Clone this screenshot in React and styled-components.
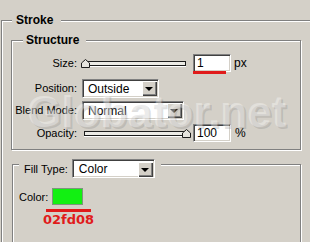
import React from "react";
import styled, { createGlobalStyle, css } from "styled-components";

const Global = createGlobalStyle`
  html, body { margin: 0; padding: 0; background: #d4d0c8; }
  body {
    font-family: "Liberation Sans", Arial, sans-serif;
    font-size: 11px;
    color: #000;
  }
`;

const Screen = styled.div`
  position: relative;
  box-sizing: border-box;
  width: 310px;
  height: 242px;
  overflow: hidden;
  background: #d4d0c8;
  padding: 20px 0 0 1px;
`;

// etched group box: grey line with a white line beside it
const Group = styled.div`
  box-sizing: border-box;
  flex-shrink: 0;
  width: ${(p) => p.$w}px;
  height: ${(p) => p.$h}px;
  margin: ${(p) => p.$top}px 0 0 ${(p) => p.$left}px;
  border: 1px solid #808080;
  box-shadow: inset 1px 1px 0 #fff, 1px 1px 0 #fff;
  display: flex;
  flex-direction: column;
`;

const Legend = styled.div`
  display: flex;
  align-items: center;
  gap: 4px;
  width: max-content;
  height: ${(p) => p.$h || 14}px;
  line-height: 14px;
  margin: ${(p) => p.$top}px 0 0 ${(p) => p.$left}px;
  padding: 0 ${(p) => p.$pr}px 0 ${(p) => p.$pl}px;
  background: #d4d0c8;
  font-size: ${(p) => (p.$bold ? 12 : 11)}px;
  font-weight: ${(p) => (p.$bold ? "bold" : "normal")};
`;

const Row = styled.div`
  display: flex;
  align-items: center;
  height: 22px;
  margin-top: ${(p) => p.$mt}px;
`;

const Label = styled.span`
  flex-shrink: 0;
  width: 65px;
  margin-right: 5px;
  text-align: right;
`;

const Slider = styled.div`
  position: relative;
  flex-shrink: 0;
  width: 106px;
  height: 22px;
  display: flex;
  align-items: center;
`;

const Track = styled.div`
  box-sizing: border-box;
  width: 102px;
  height: 5px;
  margin-left: 2px;
  border: 1px solid #1c1c1c;
  background: #ecebe6;
  box-shadow: 0 1px 0 #fff;
`;

const Thumb = styled.svg`
  position: absolute;
  top: 7px;
  width: 9px;
  height: 9px;
`;

const sunken = css`
  box-sizing: border-box;
  background: #fff;
  border: 1px solid;
  border-color: #808080 #fff #fff #808080;
  box-shadow: inset 1px 1px 0 #404040, inset -1px -1px 0 #d4d0c8;
`;

const NumberBox = styled.div`
  ${sunken};
  position: relative;
  flex-shrink: 0;
  width: 38px;
  height: 18px;
  margin-left: 5px;
  padding-left: 3px;
  display: flex;
  align-items: center;
  font-size: 12px;
  ${(p) =>
    p.$marked &&
    css`
      &::after {
        content: "";
        position: absolute;
        left: -1px;
        top: 100%;
        width: 33px;
        height: 3px;
        background: #e01b1b;
      }
    `}
`;

const Unit = styled.span`
  margin-left: ${(p) => p.$ml}px;
  font-size: 12px;
`;

const SelectBox = styled.div`
  ${sunken};
  flex-shrink: 0;
  width: ${(p) => p.$w}px;
  height: 19px;
  padding: 2px 1px 1px 1px;
  display: flex;
  align-items: center;
  font-size: 12px;
  font-weight: normal;
  line-height: 14px;
`;

const SelectText = styled.span`
  flex: 1;
  padding-left: ${(p) => p.$pl || 4}px;
`;

const DropButton = styled.span`
  box-sizing: border-box;
  width: 15px;
  height: 15px;
  background: #d4d0c8;
  box-shadow: inset 1px 1px 0 #fff, inset -1px -1px 0 #404040,
    inset -2px -2px 0 #808080;
  display: flex;
  align-items: center;
  justify-content: center;
  &::before {
    content: "";
    margin: 1px 1px 0 0;
    border-top: 4px solid #000;
    border-left: 4px solid transparent;
    border-right: 4px solid transparent;
  }
`;

const ColorRow = styled.div`
  display: flex;
  align-items: center;
  gap: 4px;
  height: 17px;
  margin-top: 10px;
  padding-left: 6px;
`;

const Swatch = styled.div`
  box-sizing: border-box;
  width: 31px;
  height: 17px;
  background: #12f012;
  border: 1px solid #7d957d;
`;

const Underline = styled.div`
  width: 45px;
  height: 3px;
  margin: 4px 0 0 33px;
  background: #e01b1b;
`;

const HexNote = styled.div`
  margin-left: 30px;
  font-family: "DejaVu Sans", sans-serif;
  font-size: 13px;
  font-weight: bold;
  line-height: 15px;
  color: #e01b1b;
`;

// faint embossed watermark lying over the dialog
const Watermark = styled.div`
  position: absolute;
  left: 28px;
  top: 91px;
  font-family: "Liberation Sans", Arial, sans-serif;
  font-weight: bold;
  font-size: 44px;
  line-height: 44px;
  color: rgba(255, 255, 255, 0.07);
  text-shadow: -1px -1px 0 rgba(255, 255, 255, 0.35),
    1px 1px 0 rgba(110, 110, 110, 0.22);
  pointer-events: none;
  white-space: nowrap;
`;

function Select({ width, value, pl }) {
  return (
    <SelectBox $w={width}>
      <SelectText $pl={pl}>{value}</SelectText>
      <DropButton />
    </SelectBox>
  );
}

function SliderControl({ pos }) {
  return (
    <Slider>
      <Track />
      <Thumb viewBox="0 0 9 9" style={{ left: pos }}>
        <path
          d="M0.5 8.5 V4 L4.5 0.5 L8.5 4 V8.5 Z"
          fill="#e6e4de"
          stroke="#1c1c1c"
          strokeWidth="1"
        />
      </Thumb>
    </Slider>
  );
}

export default function App() {
  return (
    <>
      <Global />
      <Screen>
        <Group $w={330} $h={260} $top={0} $left={0}>
          <Legend $bold $top={-8} $left={10} $pl={4} $pr={8}>
            Stroke
          </Legend>

          <Group $w={290} $h={110} $top={13} $left={9}>
            <Legend $bold $top={-8} $left={11} $pl={3} $pr={7}>
              Structure
            </Legend>
            <Row $mt={5}>
              <Label>Size:</Label>
              <SliderControl pos={-1} />
              <NumberBox $marked>1</NumberBox>
              <Unit $ml={3}>px</Unit>
            </Row>
            <Row $mt={3}>
              <Label>Position:</Label>
              <Select width={77} value="Outside" />
            </Row>
            <Row $mt={0}>
              <Label>Blend Mode:</Label>
              <Select width={102} value="Normal" />
            </Row>
            <Row $mt={1}>
              <Label>Opacity:</Label>
              <SliderControl pos={100} />
              <NumberBox>100</NumberBox>
              <Unit $ml={4}>%</Unit>
            </Row>
          </Group>

          <Group $w={289} $h={100} $top={14} $left={10}>
            <Legend $h={19} $top={-6} $left={6} $pl={5} $pr={6}>
              <span>Fill Type:</span>
              <Select width={83} value="Color" pl={5} />
            </Legend>
            <ColorRow>
              <span>Color:</span>
              <Swatch />
            </ColorRow>
            <Underline />
            <HexNote>02fd08</HexNote>
          </Group>
        </Group>
        <Watermark>Globator.net</Watermark>
      </Screen>
    </>
  );
}
